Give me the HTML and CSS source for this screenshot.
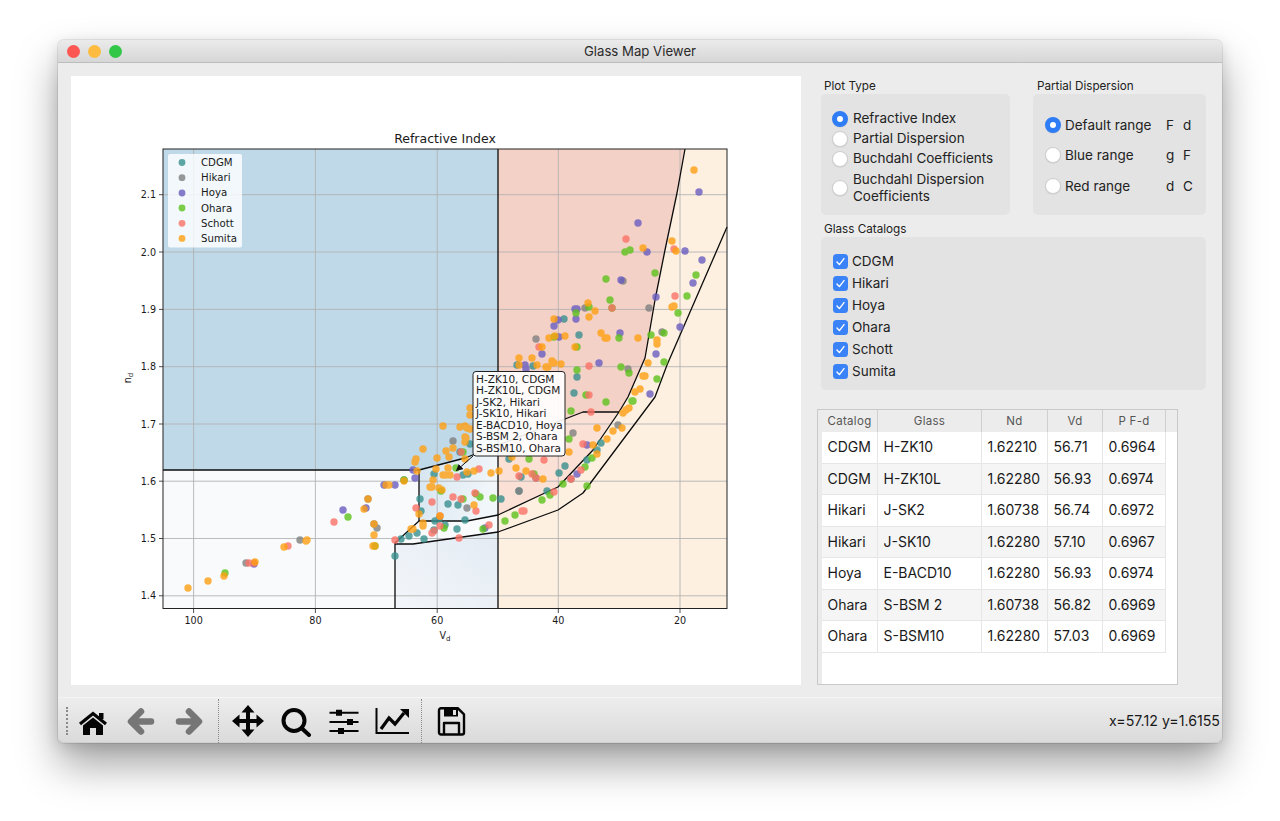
FILE: index.html
```html
<!DOCTYPE html>
<html lang="en">
<head>
<meta charset="utf-8">
<title>Glass Map Viewer</title>
<link rel="stylesheet" href="styles.css">
</head>
<body>
<div class="window">
  <header class="titlebar">
    <div class="lights"><span class="light red"></span><span class="light amber"></span><span class="light green"></span></div>
    <div class="title">Glass Map Viewer</div>
  </header>
  <main class="content">
    <div class="plot">
      <svg class="chart" viewBox="71 76 730 609" width="730" height="609">
        <defs>
          <linearGradient id="gLow" x1="0" x2="1" y1="0" y2="0.3"><stop offset="0" stop-color="#d3e4ef"/><stop offset="1" stop-color="#f1f6fa"/></linearGradient>
          <linearGradient id="gLow2" x1="0" x2="1" y1="1" y2="0"><stop offset="0" stop-color="#f3f6fa"/><stop offset="1" stop-color="#e3ebf3"/></linearGradient>
          <marker id="tip" viewBox="0 0 8 8" refX="7" refY="4" markerWidth="7" markerHeight="7" orient="auto"><path d="M0 0L8 4L0 8Z" fill="#111"/></marker>
        </defs>
        <rect class="r-white" x="163" y="149" width="335" height="460"/>
        <rect class="r-cream" x="498" y="149" width="229" height="460"/>
        <path class="r-blue" d="M163 149H498V445L465 458L419 470H163Z"/>
        <path class="r-pink" d="M498 149H685L677 193L665 250L655 300L645 358L628 397L619 412H583L565 419L498 445Z"/>
        <path class="r-pink2" d="M498 445L565 419L583 412H619L593 450L558 487L547 492L498 515Z"/>
        <path fill="url(#gLow)" d="M419 470L465 458L498 445V515L467 521H419Z"/>
        <path fill="url(#gLow2)" d="M395 544H413L498 532V609H395Z"/>
        <g class="grid">
          <path d="M193.6 149V609M315.4 149V609M437.2 149V609M558.3 149V609M680 149V609"/>
          <path d="M163 194.7H727M163 252H727M163 309.4H727M163 366.7H727M163 424H727M163 481.2H727M163 538.5H727M163 595.8H727"/>
        </g>
        <g class="bound">
          <path d="M163 470H419L465 458L565 419L583 412H619"/>
          <path d="M419 470V521M498 149V609"/>
          <path d="M685 149L677 193L665 250L655 300L645 358L628 397L619 412L593 450L558 487L547 492L498 515L467 521H419L395 543V609"/>
          <path d="M395 544H413L498 532L558 510L583 493L655 397L667 365L727 227"/>
        </g>
        <g class="pts cdgm">
          <circle cx="564" cy="319"/><circle cx="579" cy="335"/><circle cx="533" cy="366"/><circle cx="517" cy="365"/><circle cx="577" cy="377"/><circle cx="574" cy="393"/><circle cx="601" cy="443"/><circle cx="597" cy="450"/><circle cx="587" cy="460"/><circle cx="565" cy="466"/><circle cx="559" cy="473"/><circle cx="547" cy="491"/><circle cx="509" cy="459"/><circle cx="521" cy="477"/><circle cx="519" cy="491"/><circle cx="501" cy="499"/><circle cx="465" cy="520"/><circle cx="457" cy="529"/><circle cx="424" cy="539"/><circle cx="409" cy="536"/><circle cx="401" cy="539"/><circle cx="395" cy="556"/><circle cx="417" cy="533"/><circle cx="435" cy="521"/><circle cx="445" cy="525"/><circle cx="434" cy="530"/><circle cx="448" cy="504"/><circle cx="420" cy="499"/><circle cx="421" cy="511"/><circle cx="434" cy="474"/><circle cx="463" cy="475"/><circle cx="470" cy="444"/><circle cx="460" cy="452"/><circle cx="439" cy="519"/><circle cx="468" cy="474"/><circle cx="458" cy="505"/>
        </g>
        <g class="pts hikari">
          <circle cx="585" cy="308"/><circle cx="623" cy="281"/><circle cx="649" cy="308"/><circle cx="662" cy="332"/><circle cx="536" cy="339"/><circle cx="628" cy="369"/><circle cx="573" cy="433"/><circle cx="618" cy="425"/><circle cx="467" cy="508"/><circle cx="453" cy="441"/><circle cx="246" cy="563"/><circle cx="300" cy="540"/><circle cx="377" cy="528"/><circle cx="368" cy="499"/><circle cx="374" cy="524"/><circle cx="536" cy="478"/><circle cx="519" cy="491"/><circle cx="571" cy="479"/><circle cx="404" cy="480"/>
        </g>
        <g class="pts hoya">
          <circle cx="699" cy="192"/><circle cx="638" cy="223"/><circle cx="647" cy="252"/><circle cx="685" cy="251"/><circle cx="702" cy="260"/><circle cx="693" cy="283"/><circle cx="621" cy="280"/><circle cx="656" cy="297"/><circle cx="680" cy="327"/><circle cx="575" cy="309"/><circle cx="577" cy="309"/><circle cx="576" cy="319"/><circle cx="558" cy="320"/><circle cx="554" cy="326"/><circle cx="620" cy="333"/><circle cx="559" cy="337"/><circle cx="656" cy="354"/><circle cx="542" cy="354"/><circle cx="525" cy="365"/><circle cx="526" cy="369"/><circle cx="599" cy="363"/><circle cx="650" cy="394"/><circle cx="587" cy="445"/><circle cx="577" cy="474"/><circle cx="485" cy="528"/><circle cx="413" cy="470"/><circle cx="415" cy="478"/><circle cx="395" cy="485"/><circle cx="384" cy="485"/><circle cx="254" cy="564"/><circle cx="343" cy="510"/><circle cx="366" cy="508"/>
        </g>
        <g class="pts ohara">
          <circle cx="625" cy="252"/><circle cx="630" cy="250"/><circle cx="655" cy="273"/><circle cx="696" cy="275"/><circle cx="606" cy="279"/><circle cx="687" cy="296"/><circle cx="678" cy="313"/><circle cx="610" cy="300"/><circle cx="612" cy="308"/><circle cx="589" cy="307"/><circle cx="576" cy="313"/><circle cx="619" cy="338"/><circle cx="651" cy="335"/><circle cx="664" cy="333"/><circle cx="664" cy="362"/><circle cx="554" cy="337"/><circle cx="577" cy="347"/><circle cx="577" cy="370"/><circle cx="621" cy="367"/><circle cx="629" cy="373"/><circle cx="657" cy="379"/><circle cx="632" cy="401"/><circle cx="633" cy="401"/><circle cx="586" cy="395"/><circle cx="606" cy="402"/><circle cx="571" cy="411"/><circle cx="569" cy="439"/><circle cx="592" cy="458"/><circle cx="585" cy="467"/><circle cx="563" cy="484"/><circle cx="587" cy="486"/><circle cx="550" cy="495"/><circle cx="542" cy="500"/><circle cx="515" cy="515"/><circle cx="505" cy="521"/><circle cx="483" cy="529"/><circle cx="529" cy="459"/><circle cx="534" cy="474"/><circle cx="480" cy="497"/><circle cx="493" cy="498"/><circle cx="463" cy="499"/><circle cx="444" cy="528"/><circle cx="441" cy="491"/><circle cx="456" cy="468"/><circle cx="404" cy="480"/><circle cx="225" cy="573"/><circle cx="348" cy="517"/><circle cx="375" cy="546"/><circle cx="463" cy="452"/><circle cx="476" cy="494"/>
        </g>
        <g class="pts schott">
          <circle cx="626" cy="239"/><circle cx="674" cy="249"/><circle cx="675" cy="296"/><circle cx="612" cy="308"/><circle cx="539" cy="347"/><circle cx="589" cy="366"/><circle cx="589" cy="395"/><circle cx="591" cy="412"/><circle cx="583" cy="444"/><circle cx="581" cy="470"/><circle cx="554" cy="492"/><circle cx="524" cy="511"/><circle cx="489" cy="525"/><circle cx="459" cy="538"/><circle cx="395" cy="540"/><circle cx="432" cy="533"/><circle cx="434" cy="531"/><circle cx="440" cy="526"/><circle cx="440" cy="516"/><circle cx="476" cy="511"/><circle cx="475" cy="493"/><circle cx="461" cy="499"/><circle cx="453" cy="497"/><circle cx="432" cy="502"/><circle cx="416" cy="508"/><circle cx="457" cy="477"/><circle cx="479" cy="469"/><circle cx="461" cy="452"/><circle cx="544" cy="460"/><circle cx="519" cy="476"/><circle cx="532" cy="474"/><circle cx="536" cy="478"/><circle cx="571" cy="479"/><circle cx="249" cy="563"/><circle cx="288" cy="546"/><circle cx="334" cy="522"/><circle cx="254" cy="563"/><circle cx="522" cy="511"/>
        </g>
        <g class="pts sumita">
          <circle cx="694" cy="170"/><circle cx="643" cy="248"/><circle cx="672" cy="241"/><circle cx="676" cy="251"/><circle cx="672" cy="307"/><circle cx="674" cy="306"/><circle cx="588" cy="303"/><circle cx="595" cy="311"/><circle cx="589" cy="317"/><circle cx="554" cy="319"/><circle cx="601" cy="333"/><circle cx="605" cy="338"/><circle cx="607" cy="338"/><circle cx="638" cy="338"/><circle cx="657" cy="340"/><circle cx="657" cy="344"/><circle cx="648" cy="363"/><circle cx="542" cy="347"/><circle cx="549" cy="338"/><circle cx="555" cy="336"/><circle cx="565" cy="336"/><circle cx="575" cy="347"/><circle cx="519" cy="358"/><circle cx="519" cy="365"/><circle cx="532" cy="358"/><circle cx="537" cy="365"/><circle cx="546" cy="367"/><circle cx="548" cy="367"/><circle cx="552" cy="361"/><circle cx="554" cy="363"/><circle cx="561" cy="364"/><circle cx="643" cy="376"/><circle cx="645" cy="376"/><circle cx="635" cy="392"/><circle cx="640" cy="389"/><circle cx="629" cy="408"/><circle cx="626" cy="410"/><circle cx="623" cy="413"/><circle cx="622" cy="428"/><circle cx="613" cy="431"/><circle cx="597" cy="428"/><circle cx="569" cy="452"/><circle cx="593" cy="445"/><circle cx="607" cy="439"/><circle cx="597" cy="454"/><circle cx="512" cy="457"/><circle cx="516" cy="468"/><circle cx="526" cy="471"/><circle cx="543" cy="479"/><circle cx="474" cy="505"/><circle cx="491" cy="473"/><circle cx="499" cy="471"/><circle cx="474" cy="471"/><circle cx="467" cy="472"/><circle cx="443" cy="475"/><circle cx="446" cy="475"/><circle cx="450" cy="475"/><circle cx="448" cy="468"/><circle cx="436" cy="469"/><circle cx="433" cy="480"/><circle cx="430" cy="487"/><circle cx="432" cy="487"/><circle cx="439" cy="488"/><circle cx="442" cy="490"/><circle cx="417" cy="471"/><circle cx="404" cy="481"/><circle cx="389" cy="485"/><circle cx="386" cy="485"/><circle cx="423" cy="523"/><circle cx="423" cy="526"/><circle cx="419" cy="514"/><circle cx="413" cy="529"/><circle cx="411" cy="529"/><circle cx="440" cy="516"/><circle cx="423" cy="449"/><circle cx="415" cy="462"/><circle cx="416" cy="459"/><circle cx="437" cy="458"/><circle cx="446" cy="451"/><circle cx="449" cy="457"/><circle cx="453" cy="448"/><circle cx="465" cy="459"/><circle cx="443" cy="426"/><circle cx="460" cy="427"/><circle cx="465" cy="426"/><circle cx="467" cy="428"/><circle cx="470" cy="429"/><circle cx="465" cy="437"/><circle cx="466" cy="438"/><circle cx="465" cy="442"/><circle cx="470" cy="408"/><circle cx="470" cy="415"/><circle cx="188" cy="588"/><circle cx="208" cy="581"/><circle cx="224" cy="576"/><circle cx="255" cy="562"/><circle cx="284" cy="547"/><circle cx="306" cy="541"/><circle cx="307" cy="540"/><circle cx="364" cy="509"/><circle cx="368" cy="499"/><circle cx="374" cy="524"/><circle cx="374" cy="535"/><circle cx="373" cy="546"/><circle cx="375" cy="546"/>
        </g>
        <g class="legend">
          <rect class="legend-box" x="168" y="154" width="74" height="93.5" rx="2"/>
          <g class="pts-l"><circle class="cdgm" cx="182" cy="162.5"/><circle class="hikari" cx="182" cy="177.7"/><circle class="hoya" cx="182" cy="193"/><circle class="ohara" cx="182" cy="208"/><circle class="schott" cx="182" cy="223.3"/><circle class="sumita" cx="182" cy="238.4"/></g>
          <text class="t" x="201" y="166">CDGM</text><text class="t" x="201" y="181.2">Hikari</text><text class="t" x="201" y="196.4">Hoya</text><text class="t" x="201" y="211.6">Ohara</text><text class="t" x="201" y="226.8">Schott</text><text class="t" x="201" y="242">Sumita</text>
        </g>
        <rect class="frame" x="163" y="149" width="564" height="459.5"/>
        <path class="ticks" d="M193.6 609v4M315.4 609v4M437.2 609v4M558.3 609v4M680 609v4M163 194.7h-4M163 252h-4M163 309.4h-4M163 366.7h-4M163 424h-4M163 481.2h-4M163 538.5h-4M163 595.8h-4"/>
        <g class="tx"><text x="193.6" y="624">100</text><text x="315.4" y="624">80</text><text x="437.2" y="624">60</text><text x="558.3" y="624">40</text><text x="680" y="624">20</text></g>
        <g class="ty"><text x="156" y="198.3">2.1</text><text x="156" y="255.6">2.0</text><text x="156" y="313">1.9</text><text x="156" y="370.3">1.8</text><text x="156" y="427.6">1.7</text><text x="156" y="484.8">1.6</text><text x="156" y="542.1">1.5</text><text x="156" y="599.4">1.4</text></g>
        <text class="plot-title" x="445" y="142.5">Refractive Index</text>
        <text class="axis-label" x="445" y="638.5">V<tspan class="sub" dy="2">d</tspan></text>
        <text class="axis-label" transform="translate(131 378) rotate(-90)">n<tspan class="sub" dy="2">d</tspan></text>
        <path class="pointer" d="M473 456L456.5 470.5" marker-end="url(#tip)"/>
        <rect class="tip-box" x="473" y="371.5" width="92" height="84.5" rx="3"/>
        <g class="tip-text"><text x="476" y="382.5">H-ZK10, CDGM</text><text x="476" y="394">H-ZK10L, CDGM</text><text x="476" y="405.6">J-SK2, Hikari</text><text x="476" y="417.1">J-SK10, Hikari</text><text x="476" y="428.7">E-BACD10, Hoya</text><text x="476" y="440.2">S-BSM 2, Ohara</text><text x="476" y="451.8">S-BSM10, Ohara</text></g>
      </svg>
    </div>
    <aside class="side">
      <div class="top-row">
        <section class="group plot-type">
          <div class="group-label">Plot Type</div>
          <div class="box plot-box">
            <div class="radio-row"><span class="radio on"></span><span>Refractive Index</span></div>
            <div class="radio-row"><span class="radio"></span><span>Partial Dispersion</span></div>
            <div class="radio-row"><span class="radio"></span><span>Buchdahl Coefficients</span></div>
            <div class="radio-row two"><span class="radio"></span><span>Buchdahl Dispersion<br>Coefficients</span></div>
          </div>
        </section>
        <section class="group partial">
          <div class="group-label">Partial Dispersion</div>
          <div class="box partial-box">
            <div class="range-row"><span class="radio on"></span><span class="range-name">Default range</span><span class="ltr">F</span><span class="ltr">d</span></div>
            <div class="range-row"><span class="radio"></span><span class="range-name">Blue range</span><span class="ltr">g</span><span class="ltr">F</span></div>
            <div class="range-row"><span class="radio"></span><span class="range-name">Red range</span><span class="ltr">d</span><span class="ltr">C</span></div>
          </div>
        </section>
      </div>
      <section class="group catalogs">
        <div class="group-label second">Glass Catalogs</div>
        <div class="box cat-box">
          <div class="check-row"><svg class="check" viewBox="0 0 15 15"><rect width="15" height="15" rx="3.5"/><path d="M4 8l2.4 2.6L11 4.6"/></svg><span>CDGM</span></div>
          <div class="check-row"><svg class="check" viewBox="0 0 15 15"><rect width="15" height="15" rx="3.5"/><path d="M4 8l2.4 2.6L11 4.6"/></svg><span>Hikari</span></div>
          <div class="check-row"><svg class="check" viewBox="0 0 15 15"><rect width="15" height="15" rx="3.5"/><path d="M4 8l2.4 2.6L11 4.6"/></svg><span>Hoya</span></div>
          <div class="check-row"><svg class="check" viewBox="0 0 15 15"><rect width="15" height="15" rx="3.5"/><path d="M4 8l2.4 2.6L11 4.6"/></svg><span>Ohara</span></div>
          <div class="check-row"><svg class="check" viewBox="0 0 15 15"><rect width="15" height="15" rx="3.5"/><path d="M4 8l2.4 2.6L11 4.6"/></svg><span>Schott</span></div>
          <div class="check-row"><svg class="check" viewBox="0 0 15 15"><rect width="15" height="15" rx="3.5"/><path d="M4 8l2.4 2.6L11 4.6"/></svg><span>Sumita</span></div>
        </div>
      </section>
      <div class="table-wrap">
        <table class="glass">
          <colgroup><col class="c1"><col class="c2"><col class="c3"><col class="c4"><col class="c5"><col></colgroup>
          <thead><tr><th>Catalog</th><th>Glass</th><th>Nd</th><th>Vd</th><th>P F-d</th><th class="filler"></th></tr></thead>
          <tbody>
            <tr><td>CDGM</td><td>H-ZK10</td><td>1.62210</td><td>56.71</td><td>0.6964</td></tr>
            <tr><td>CDGM</td><td>H-ZK10L</td><td>1.62280</td><td>56.93</td><td>0.6974</td></tr>
            <tr><td>Hikari</td><td>J-SK2</td><td>1.60738</td><td>56.74</td><td>0.6972</td></tr>
            <tr><td>Hikari</td><td>J-SK10</td><td>1.62280</td><td>57.10</td><td>0.6967</td></tr>
            <tr><td>Hoya</td><td>E-BACD10</td><td>1.62280</td><td>56.93</td><td>0.6974</td></tr>
            <tr><td>Ohara</td><td>S-BSM 2</td><td>1.60738</td><td>56.82</td><td>0.6969</td></tr>
            <tr><td>Ohara</td><td>S-BSM10</td><td>1.62280</td><td>57.03</td><td>0.6969</td></tr>
          </tbody>
        </table>
      </div>
    </aside>
  </main>
  <footer class="toolbar">
    <span class="grip"></span>
    <button class="tool"><svg class="ico" viewBox="0 0 32 32"><path d="M6 20.5L16 12.5L26 20.5V30H19V23H13V30H6Z"/><path class="st3" d="M3 19L16 8.5L29 19"/><path d="M22 8H26.5V14H22Z"/></svg></button>
    <button class="tool"><svg class="ico gray" viewBox="0 0 32 32"><path class="st6" d="M26 16.5H8M16 6.5L6 16.5L16 26.5"/></svg></button>
    <button class="tool"><svg class="ico gray" viewBox="0 0 32 32"><path class="st6" d="M6 16.5H24M16 6.5L26 16.5L16 26.5"/></svg></button>
    <span class="sep"></span>
    <button class="tool"><svg class="ico" viewBox="0 0 32 32"><path d="M16 0L22.5 7.5H18V14H24.5V9.5L32 16L24.5 22.5V18H18V24.5H22.5L16 32L9.5 24.5H14V18H7.5V22.5L0 16L7.5 9.5V14H14V7.5H9.5Z"/></svg></button>
    <button class="tool"><svg class="ico" viewBox="0 0 32 32"><circle class="st4" cx="14" cy="15.5" r="10.5"/><path class="st4" d="M22 23.5L29 30"/></svg></button>
    <button class="tool"><svg class="ico" viewBox="0 0 32 32"><path class="st2" d="M1.5 7.7H30.5M1.5 17H30.5M1.5 26H30.5"/><path d="M8 4.7H14V10.7H8ZM19 14H25V20H19ZM10 23H16V29H10Z"/></svg></button>
    <button class="tool"><svg class="ico over" viewBox="0 0 32 32"><path class="st2" d="M0.5 3V28H33"/><path class="st3" d="M5 24L13 13L19 19L28 8"/><path d="M24 4H33V13Z"/></svg></button>
    <span class="sep"></span>
    <button class="tool"><svg class="ico" viewBox="0 0 32 32"><path class="st25" d="M6 3.3H23L29 9.3V27.5A2 2 0 0 1 27 29.5H6A2 2 0 0 1 4 27.5V5.3A2 2 0 0 1 6 3.3Z"/><path d="M9 3.5H23V11.5H9Z"/><path class="hole" d="M18 5H21V10H18Z"/><path class="st25" d="M9 29V18H24V29"/></svg></button>
    <div class="status">x=57.12 y=1.6155</div>
  </footer>
</div>
</body>
</html>
```
FILE: styles.css
```css
* { box-sizing: border-box; }
html, body { margin: 0; height: 100%; background: #fff; overflow: hidden; }
body { padding: 40px 0 0 58px; font-family: Inter, "Liberation Sans", sans-serif; color: #222; }

.window {
  width: 1164px; height: 703px; display: flex; flex-direction: column;
  background: #ececec; border-radius: 6px;
  box-shadow: 0 0 0 1px rgba(0,0,0,.08), 0 22px 42px rgba(0,0,0,.36), 0 4px 14px rgba(0,0,0,.12);
}
.titlebar {
  height: 23px; flex: none; display: grid; grid-template-columns: 1fr auto 1fr; align-items: center;
  background: linear-gradient(#ebebeb, #d6d6d6); border-bottom: 1px solid #bdbdbd; border-radius: 6px 6px 0 0;
}
.lights { display: flex; gap: 8px; padding-left: 9px; }
.light { width: 13px; height: 13px; border-radius: 50%; }
.red { background: #fc5753; }
.amber { background: #fdbc40; }
.green { background: #33c748; }
.title { grid-column: 2; font-size: 13.2px; color: #2a2a2a; }

.content { flex: 1; display: flex; padding: 13px 0 12px 13px; min-height: 0; }
.plot { width: 730px; height: 609px; background: #fff; flex: none; }
.chart { display: block; }

.r-white { fill: #f8fafc; }
.r-cream { fill: #fdf0e1; }
.r-blue { fill: #bfd9e8; }
.r-pink { fill: #f4d1c7; }
.r-pink2 { fill: #fbe0d5; }
.grid path { fill: none; stroke: #b0b0b0; stroke-width: 1; opacity: .85; }
.bound path { fill: none; stroke: #0c0c0c; stroke-width: 1.3; stroke-linejoin: round; }
.pts circle { r: 3.7px; }
.pts-l circle { r: 3.4px; }
.pts { opacity: .8; }
.cdgm, .pts-l .cdgm { fill: #38908f; }
.hikari, .pts-l .hikari { fill: #808080; }
.hoya, .pts-l .hoya { fill: #6a5dc0; }
.ohara, .pts-l .ohara { fill: #5ec31c; }
.schott, .pts-l .schott { fill: #fb7266; }
.sumita, .pts-l .sumita { fill: #ffa012; }
.pts-l { opacity: .8; }
.legend-box { fill: #fff; fill-opacity: .8; }
.t, .tx, .ty, .plot-title, .axis-label, .tip-text { font-family: "DejaVu Sans", sans-serif; fill: #1a1a1a; }
.t { font-size: 10.2px; }
.tip-text { font-size: 10.5px; }
.tx, .ty { font-size: 9.6px; }
.tx { text-anchor: middle; }
.ty { text-anchor: end; }
.plot-title { font-size: 12.5px; text-anchor: middle; }
.axis-label { font-size: 9.6px; text-anchor: middle; }
.sub { font-size: 7px; }
.frame { fill: none; stroke: #222; stroke-width: 1; }
.ticks { fill: none; stroke: #222; stroke-width: .8; }
.pointer { fill: none; stroke: #111; stroke-width: 1; }
.tip-box { fill: #fff; fill-opacity: .9; stroke: #222; stroke-width: 1; }

.side { width: 385px; margin-left: 20px; flex: none; display: flex; flex-direction: column; font-size: 13.5px; }
.top-row { display: flex; gap: 23px; }
.plot-type { width: 189px; }
.partial { width: 173px; }
.group-label { height: 18px; padding: 4px 0 0 3px; font-size: 11.7px; line-height: 13px; color: #222; }
.group-label.second { height: 22px; padding-top: 8px; }
.partial .group-label { padding-left: 4px; }
.box { background: #e3e3e3; border-radius: 5px; }
.plot-box { height: 121px; padding: 14.5px 0 0 11px; }
.radio-row { display: flex; align-items: center; gap: 5px; height: 20px; line-height: 17px; }
.radio-row.two { height: 34px; margin-top: 2px; }
.radio {
  width: 16px; height: 16px; flex: none; border-radius: 50%; background: #fff;
  border: 1px solid #cfcfcf; box-shadow: 0 .5px 1px rgba(0,0,0,.1);
}
.radio.on { background: #fff; border: 5px solid #2f7df6; }
.partial-box { height: 121px; padding: 15.5px 0 0 11.5px; }
.range-row { display: flex; align-items: center; height: 30.5px; }
.range-name { width: 101px; margin-left: 4.5px; }
.ltr { width: 17px; }
.catalogs { display: block; }
.cat-box { height: 153px; padding: 13px 0 0 11.5px; }
.check-row { display: flex; align-items: center; gap: 4.5px; height: 22px; }
.check { width: 15px; height: 15px; flex: none; }
.check rect { fill: #3a82f7; }
.check path { fill: none; stroke: #fff; stroke-width: 1.4; stroke-linecap: round; stroke-linejoin: round; }

.table-wrap {
  width: 361px; height: 276px; margin: 19px 0 0 -4px; background: #fff;
  border: 1px solid #c9c9c9; border-left-width: 1px; position: relative; padding-left: 4px;
  background-image: linear-gradient(#ebebeb, #ebebeb); background-size: 4px 100%; background-repeat: no-repeat;
}
.glass { width: 100%; border-collapse: separate; border-spacing: 0; table-layout: fixed; font-size: 14px; color: #1a1a1a; }
.c1 { width: 56px; }
.c2 { width: 104px; }
.c3 { width: 66px; }
.c4 { width: 55px; }
.c5 { width: 63px; }
.glass th {
  height: 22px; padding: 0; font-weight: 400; font-size: 11.5px; color: #555; background: #ececec;
  border-right: 1px solid #cfcfcf; letter-spacing: .3px;
}
.glass th.filler { border-right: 0; }
.glass td { height: 31.5px; padding: 0 0 1px 5.5px; border-right: 1px solid #e6e6e6; border-bottom: 1px solid #e6e6e6; }
.glass tbody tr:nth-child(even) td { background: #f5f5f5; }

.toolbar {
  height: 46px; flex: none; display: flex; align-items: center; position: relative;
  background: linear-gradient(#ededed, #dadada); border-top: 1px solid #f4f4f4; border-radius: 0 0 6px 6px;
  box-shadow: inset 0 -1px 0 #cfcfcf;
}
.grip { width: 2px; height: 28px; margin: 0 1px 0 8px; border-left: 2px dotted #8a8a8a; flex: none; }
.tool { width: 48px; height: 40px; padding: 0; border: 0; background: none; display: flex; align-items: center; justify-content: center; flex: none; }
.ico { width: 32px; height: 32px; fill: #050505; }
.ico.gray { fill: none; }
.ico.over { overflow: visible; }
.st2, .st3, .st4, .st25, .st6 { fill: none; stroke: #050505; }
.st2 { stroke-width: 2; }
.st25 { stroke-width: 2.4; stroke-linejoin: round; }
.st3 { stroke-width: 3.2; stroke-linejoin: miter; }
.st4 { stroke-width: 4; stroke-linecap: round; }
.st6 { stroke: #767676; stroke-width: 6.5; stroke-linecap: round; stroke-linejoin: round; }
.hole { fill: #e4e4e4; }
.sep { width: 1px; height: 44px; margin: 0 5.5px 0 4.5px; border-left: 1px dotted #8a8a8a; flex: none; }
.status { margin-left: auto; padding-right: 2px; font-size: 14.2px; color: #1a1a1a; white-space: nowrap; }
```
